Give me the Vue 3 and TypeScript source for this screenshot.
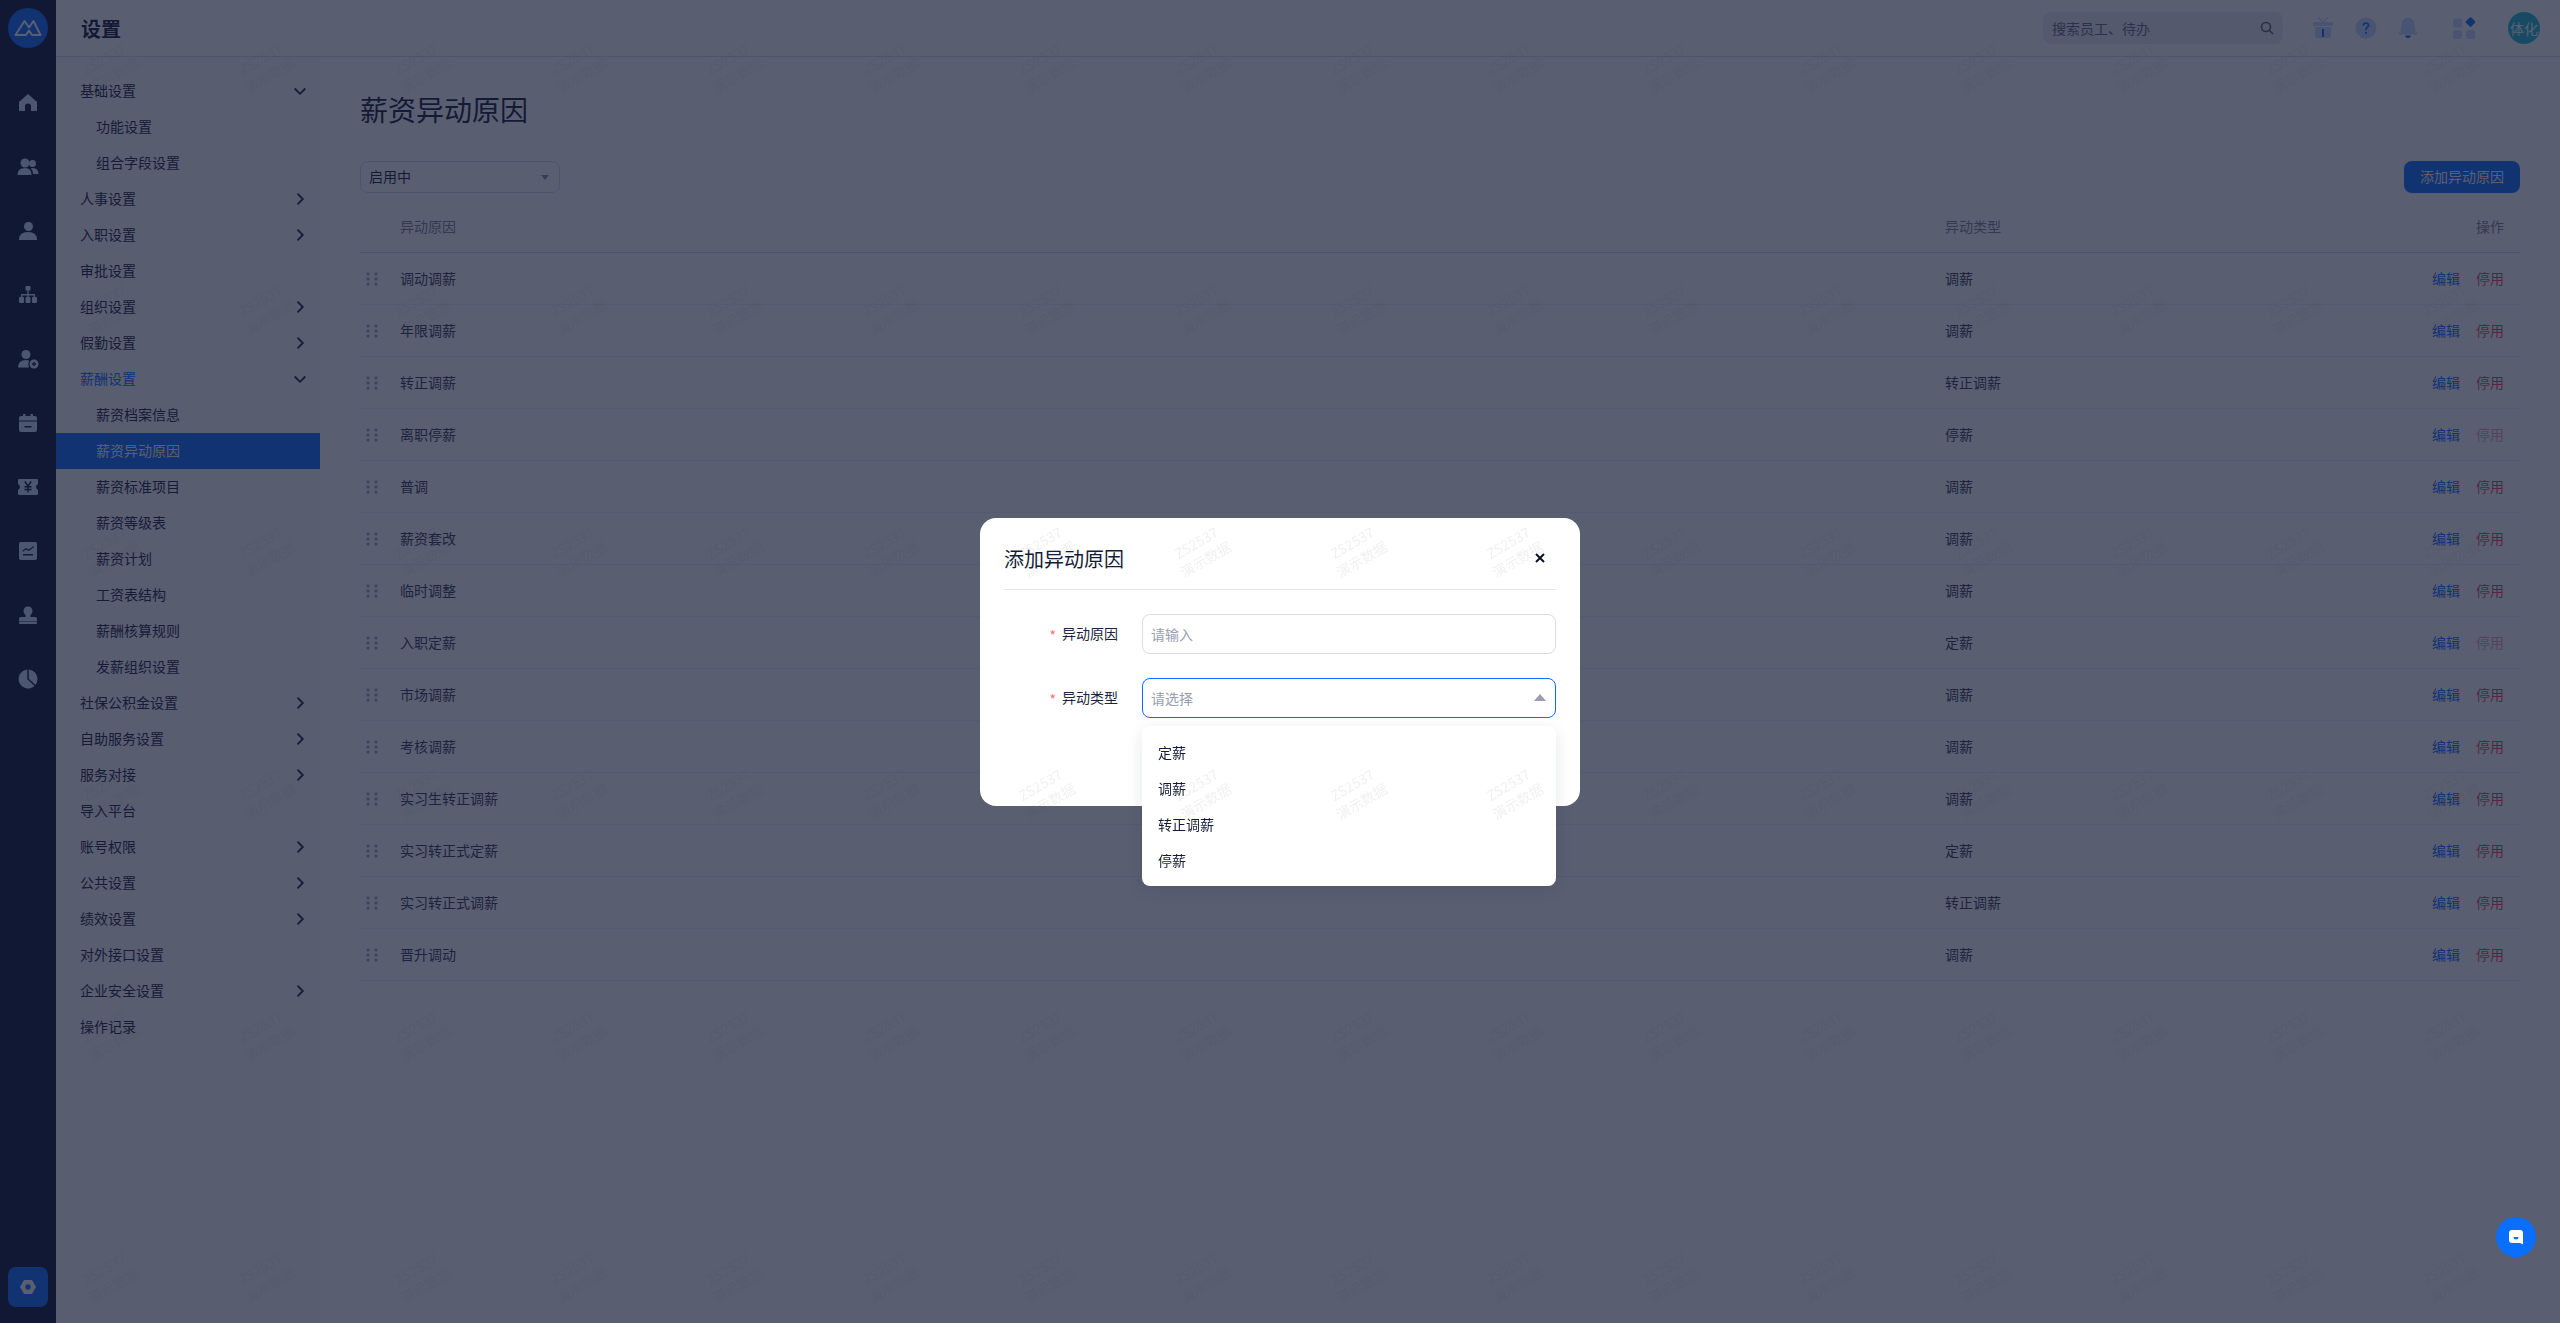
<template>
  <div class="page">
    <aside class="rail">
      <div class="logo">
        <svg width="28" height="18" viewBox="0 0 28 18" fill="none" stroke="#fff" stroke-width="2" stroke-linejoin="round">
          <path d="M1.500 16 L10.500 2 L15 8.500 L19.500 2 L26.500 16 H18 L15 11.500 L12 16 Z" />
        </svg>
      </div>
      <nav class="rail-nav">
        <div class="rail-item">
          <svg width="20" height="20" viewBox="0 0 20 20" class="rail-icon"><path d="M10 1 L19 9 V18 H13 V13 Q13 10.500 10 10.500 Q7 10.500 7 13 V18 H1 V9 Z" /></svg>
        </div>
        <div class="rail-item">
          <svg width="22" height="20" viewBox="0 0 22 20" class="rail-icon">
            <circle cx="8" cy="6" r="4.500" /><path d="M0.500 18 Q0.500 11 8 11 Q14.500 11 14.500 18 Z" />
            <circle cx="15.500" cy="6.500" r="3.500" /><path d="M15.500 11 Q21.500 11 21.500 17 H16 Q16 13 13.500 11.500 Z" />
          </svg>
        </div>
        <div class="rail-item">
          <svg width="20" height="20" viewBox="0 0 20 20" class="rail-icon"><circle cx="10.500" cy="5.500" r="4.500" /><path d="M1 19 Q1 11 10 11 Q19 11 19 19 Z" /></svg>
        </div>
        <div class="rail-item">
          <svg width="20" height="20" viewBox="0 0 20 20" class="rail-icon">
            <rect x="7.500" y="1" width="5" height="4.500" rx="1" />
            <path d="M9.300 5 h1.400 v4 h6.300 v3 h-1.400 v-1.600 h-4.900 v1.600 h-1.400 v-1.600 h-4.900 v1.600 h-1.400 v-3 h6.300 z" />
            <rect x="1" y="12" width="5" height="6" rx="1" /><rect x="7.500" y="12" width="5" height="6" rx="1" /><rect x="14" y="12" width="5" height="6" rx="1" />
          </svg>
        </div>
        <div class="rail-item">
          <svg width="22" height="20" viewBox="0 0 22 20" class="rail-icon">
            <circle cx="9" cy="5.500" r="4.500" /><path d="M1 18.500 Q1 11 9 11 Q11 11 12 11.500 Q10.500 15 12 18.500 Z" />
            <circle cx="17" cy="15" r="4.500" /><path d="M16.300 13 h1.400 v1.300 h1.300 v1.400 h-1.300 v1.300 h-1.400 v-1.300 h-1.300 v-1.400 h1.300 z" fill="#0d1730" />
          </svg>
        </div>
        <div class="rail-item">
          <svg width="20" height="20" viewBox="0 0 20 20" class="rail-icon">
            <path d="M3 3 H5 V1 H7.500 V3 H12.500 V1 H15 V3 H17 Q19 3 19 5 V7.500 H1 V5 Q1 3 3 3 Z" />
            <path fill-rule="evenodd" d="M1 8.500 H19 V17 Q19 19 17 19 H3 Q1 19 1 17 Z M6.500 13 V14.500 H13.500 V13 Z" />
          </svg>
        </div>
        <div class="rail-item">
          <svg width="20" height="16" viewBox="0 0 20 16" class="rail-icon">
            <path d="M1 0 H19 Q20 0 20 1 V5 Q18 6 18 8 Q18 10 20 11 V15 Q20 16 19 16 H1 Q0 16 0 15 V11 Q2 10 2 8 Q2 6 0 5 V1 Q0 0 1 0 Z" />
            <path d="M6.800 2.500 L10 7 L13.200 2.500 M10 7 V13.500 M6.500 7.800 H13.500 M6.500 10.500 H13.500" fill="none" stroke="#0d1730" stroke-width="1.400" />
          </svg>
        </div>
        <div class="rail-item">
          <svg width="18" height="18" viewBox="0 0 18 18" class="rail-icon">
            <path fill-rule="evenodd" d="M2 0 H16 Q18 0 18 2 V16 Q18 18 16 18 H2 Q0 18 0 16 V2 Q0 0 2 0 Z M3.500 8.500 L7 6 L10 7.500 L14.500 4 L15 5 L10 9 L7 7.500 L4 9.700 Z M4 12 H14 V13.500 H4 Z" />
          </svg>
        </div>
        <div class="rail-item">
          <svg width="18" height="18" viewBox="0 0 18 18" class="rail-icon"><circle cx="9" cy="5" r="4.500" /><path d="M6.500 8 H11.500 V11 H16 Q18 11 18 13 V15 H0 V13 Q0 11 2 11 H6.500 Z" /><rect x="0" y="15.500" width="18" height="2.500" rx="1" /></svg>
        </div>
        <div class="rail-item">
          <svg width="20" height="20" viewBox="0 0 20 20" class="rail-icon">
            <path d="M9.300 0.500 V10.300 L16.500 17 A9.500 9.500 0 1 1 9.300 0.500 Z" />
            <path d="M10.800 0.500 A9.500 9.500 0 0 1 19.500 10 Q19.500 13.500 17.500 16 L10.800 9.700 Z" />
          </svg>
        </div>
      </nav>
      <div class="rail-setting">
        <svg width="16" height="16" viewBox="0 0 16 16">
          <path fill-rule="evenodd" fill="#fff" d="M4 1 H12 L16 8 L12 15 H4 L0 8 Z M8 5.300 A2.700 2.700 0 1 0 8 10.700 A2.700 2.700 0 1 0 8 5.300 Z" />
        </svg>
      </div>
    </aside>

    <div class="body">
      <header class="topbar">
        <h1 class="topbar-title">设置</h1>
        <div class="search">
          <span class="search-text">搜索员工、待办</span>
          <svg width="14" height="14" viewBox="0 0 14 14" fill="none" stroke="#5a5f78" stroke-width="1.600"><circle cx="6" cy="6" r="4.500" /><path d="M9.500 9.500 L13 13" /></svg>
        </div>
        <div class="top-icons">
          <svg class="ic-gift" width="22" height="22" viewBox="0 0 22 22">
            <path d="M1 6 Q1 5 2 5 H20 Q21 5 21 6 V9 H1 Z" fill="#c4dcff" />
            <path d="M3 10 H19 V19 Q19 21 17 21 H5 Q3 21 3 19 Z" fill="#c4dcff" />
            <path d="M6 0.500 L11 5 L16 0.500" fill="none" stroke="#c4dcff" stroke-width="1.500" />
            <rect x="10" y="12" width="2" height="8" fill="#0a6eff" />
          </svg>
          <svg class="ic-help" width="22" height="22" viewBox="0 0 22 22">
            <circle cx="11" cy="11" r="10.500" fill="#c4dcff" />
            <path d="M8.500 8.500 Q8.500 6 11 6 Q13.500 6 13.500 8.300 Q13.500 9.700 11.900 10.600 Q11 11.200 11 13" fill="none" stroke="#0a6eff" stroke-width="1.700" />
            <circle cx="11" cy="15.800" r="1.100" fill="#0a6eff" />
          </svg>
          <svg class="ic-bell" width="20" height="22" viewBox="0 0 20 22">
            <path d="M10 0.500 Q16.500 1 16.500 9 Q16.500 14 19.500 16 Q20 17.500 18.500 17.500 H1.500 Q0 17.500 0.500 16 Q3.500 14 3.500 9 Q3.500 1 10 0.500 Z" fill="#c4dcff" />
            <path d="M7 18.500 H13 Q12.500 21 10 21 Q7.500 21 7 18.500 Z" fill="#0a6eff" />
          </svg>
          <svg class="ic-grid" width="22" height="22" viewBox="0 0 22 22">
            <rect x="0" y="1.500" width="9" height="9" rx="2.500" fill="#c4dcff" />
            <rect x="0" y="13" width="9" height="9" rx="2.500" fill="#c4dcff" />
            <rect x="13" y="13" width="9" height="9" rx="2.500" fill="#c4dcff" />
            <rect x="13.700" y="1.200" width="7.600" height="7.600" rx="1.500" transform="rotate(45 17.500 5)" fill="#0a6eff" />
          </svg>
          <div class="avatar">体化</div>
        </div>
      </header>

      <div class="content">
        <aside class="sidebar">
          <div
            v-for="item in menu"
            :key="item.label"
            class="menu-item"
            :class="{ child: item.child, active: item.active, open: item.open }"
          >
            <span>{{ item.label }}</span>
            <svg v-if="item.arrow" class="chevron" :class="item.arrow" width="12" height="12" viewBox="0 0 12 12" fill="none" stroke="#1c2440" stroke-width="1.800">
              <path d="M3.500 0.700 L8.800 6 L3.500 11.300" />
            </svg>
          </div>
        </aside>

        <main class="main">
          <h2 class="page-title">薪资异动原因</h2>
          <div class="toolbar">
            <div class="filter">
              <span>启用中</span>
              <i class="tri down"></i>
            </div>
            <button class="add-btn">添加异动原因</button>
          </div>
          <div class="table">
            <div class="tr th">
              <span></span>
              <span>异动原因</span>
              <span>异动类型</span>
              <span class="ops">操作</span>
            </div>
            <div v-for="row in rows" :key="row.name" class="tr">
              <svg class="handle" width="12" height="14" viewBox="0 0 12 14" fill="#a2a6b8">
                <circle cx="2" cy="2" r="1.600" /><circle cx="10" cy="2" r="1.600" />
                <circle cx="2" cy="7" r="1.600" /><circle cx="10" cy="7" r="1.600" />
                <circle cx="2" cy="12" r="1.600" /><circle cx="10" cy="12" r="1.600" />
              </svg>
              <span>{{ row.name }}</span>
              <span>{{ row.type }}</span>
              <span class="ops">
                <a class="edit">编辑</a>
                <a class="stop" :class="{ off: row.off }">停用</a>
              </span>
            </div>
          </div>
        </main>
      </div>
    </div>

    <div class="mask">
      <div class="dialog">
        <div class="dialog-head">
          <span>添加异动原因</span>
          <svg width="10" height="10" viewBox="0 0 10 10" stroke="#0c1226" stroke-width="2"><path d="M1 1 L9 9 M9 1 L1 9" /></svg>
        </div>
        <div class="form">
          <div class="form-row">
            <label class="form-label"><em>*</em>异动原因</label>
            <div class="field">请输入</div>
          </div>
          <div class="form-row">
            <label class="form-label"><em>*</em>异动类型</label>
            <div class="select-wrap">
              <div class="field focus">
                <span>请选择</span>
                <i class="tri up"></i>
              </div>
              <ul class="options">
                <li v-for="opt in options" :key="opt">{{ opt }}</li>
              </ul>
            </div>
          </div>
        </div>
      </div>
    </div>

    <div class="float-btn">
      <svg width="16" height="16" viewBox="0 0 16 16">
        <path fill="#fff" d="M4 1 H12 Q15 1 15 4 V14.500 Q15 15.500 14 15 L12 14 H4 Q1 14 1 11 V4 Q1 1 4 1 Z" />
        <path fill="#0a6eff" d="M5.500 8 H10.500 Q10.500 10.500 8 10.500 Q5.500 10.500 5.500 8 Z" />
      </svg>
    </div>

    <div class="watermarks">
      <div v-for="n in 96" :key="n" class="wm">
        <div class="wm-text">ZS2537<br />演示数据</div>
      </div>
    </div>
  </div>
</template>

<script setup lang="ts">
interface MenuItem {
  label: string;
  child?: boolean;
  active?: boolean;
  open?: boolean;
  arrow?: "right" | "down";
}

interface Row {
  name: string;
  type: string;
  off?: boolean;
}

const menu: MenuItem[] = [
  { label: "基础设置", arrow: "down" },
  { label: "功能设置", child: true },
  { label: "组合字段设置", child: true },
  { label: "人事设置", arrow: "right" },
  { label: "入职设置", arrow: "right" },
  { label: "审批设置" },
  { label: "组织设置", arrow: "right" },
  { label: "假勤设置", arrow: "right" },
  { label: "薪酬设置", arrow: "down", open: true },
  { label: "薪资档案信息", child: true },
  { label: "薪资异动原因", child: true, active: true },
  { label: "薪资标准项目", child: true },
  { label: "薪资等级表", child: true },
  { label: "薪资计划", child: true },
  { label: "工资表结构", child: true },
  { label: "薪酬核算规则", child: true },
  { label: "发薪组织设置", child: true },
  { label: "社保公积金设置", arrow: "right" },
  { label: "自助服务设置", arrow: "right" },
  { label: "服务对接", arrow: "right" },
  { label: "导入平台" },
  { label: "账号权限", arrow: "right" },
  { label: "公共设置", arrow: "right" },
  { label: "绩效设置", arrow: "right" },
  { label: "对外接口设置" },
  { label: "企业安全设置", arrow: "right" },
  { label: "操作记录" },
];

const rows: Row[] = [
  { name: "调动调薪", type: "调薪" },
  { name: "年限调薪", type: "调薪" },
  { name: "转正调薪", type: "转正调薪" },
  { name: "离职停薪", type: "停薪", off: true },
  { name: "普调", type: "调薪" },
  { name: "薪资套改", type: "调薪" },
  { name: "临时调整", type: "调薪" },
  { name: "入职定薪", type: "定薪", off: true },
  { name: "市场调薪", type: "调薪" },
  { name: "考核调薪", type: "调薪" },
  { name: "实习生转正调薪", type: "调薪" },
  { name: "实习转正式定薪", type: "定薪" },
  { name: "实习转正式调薪", type: "转正调薪" },
  { name: "晋升调动", type: "调薪" },
];

const options = ["定薪", "调薪", "转正调薪", "停薪"];
</script>

<style>
html,
body {
  margin: 0;
  overflow: hidden;
  background: #fff;
}
</style>

<style scoped>
* {
  box-sizing: border-box;
}

.page {
  display: flex;
  height: 100vh;
  color: #141c38;
  font-family: "Noto Sans CJK SC", "Noto Sans", sans-serif;
  font-size: 14px;
}

.rail {
  display: flex;
  flex-direction: column;
  align-items: center;
  flex: none;
  width: 56px;
  padding: 8px 0 16px;
  background: #0d1730;
}

.logo {
  display: flex;
  align-items: center;
  justify-content: center;
  width: 40px;
  height: 40px;
  border-radius: 50%;
  background: #0a6eff;
}

.rail-nav {
  margin-top: 23px;
}

.rail-item {
  display: flex;
  align-items: center;
  justify-content: center;
  width: 56px;
  height: 64px;
}

.rail-icon {
  fill: #d0e4ff;
}

.rail-setting {
  display: flex;
  align-items: center;
  justify-content: center;
  width: 40px;
  height: 40px;
  margin-top: auto;
  border-radius: 8px;
  background: #0a6eff;
}

.body {
  display: flex;
  flex: 1;
  flex-direction: column;
  min-width: 0;
}

.topbar {
  display: flex;
  align-items: center;
  flex: none;
  height: 57px;
  padding-left: 25px;
  border-bottom: 1px solid #dcdde6;
  background: #fff;
}

.topbar-title {
  margin: 0;
  font-size: 20px;
  font-weight: 700;
}

.search {
  display: flex;
  align-items: center;
  justify-content: space-between;
  width: 240px;
  height: 32px;
  margin-left: auto;
  padding: 0 9px;
  border-radius: 8px;
  background: #eceef3;
}

.search-text {
  color: #646a82;
}

.top-icons {
  display: flex;
  align-items: center;
  width: 277px;
  height: 32px;
}

.ic-gift {
  margin-left: 29px;
}

.ic-help {
  margin-left: 21px;
}

.ic-bell {
  margin-left: 21px;
}

.ic-grid {
  margin-left: 35px;
}

.avatar {
  display: flex;
  align-items: center;
  justify-content: center;
  width: 32px;
  height: 32px;
  margin-left: 33px;
  border-radius: 50%;
  background: #1fc0d4;
  color: #fff;
}

.content {
  display: flex;
  flex: 1;
  min-height: 0;
}

.sidebar {
  flex: none;
  width: 264px;
  padding-top: 16px;
  background: #fafafc;
}

.menu-item {
  display: flex;
  align-items: center;
  justify-content: space-between;
  height: 36px;
  padding: 0 14px 2px 24px;
  color: #1c2440;
}

.menu-item.child {
  padding-left: 40px;
}

.menu-item.open {
  color: #0a6eff;
}

.menu-item.active {
  background: #0a6eff;
  color: #fff;
}

.chevron {
  margin-top: 2px;
}

.chevron.down {
  transform: rotate(90deg);
}

.main {
  flex: 1;
  min-width: 0;
  padding: 31px 40px 0;
  background: #fff;
}

.page-title {
  margin: 0 0 31px;
  font-size: 28px;
  font-weight: 400;
  line-height: 42px;
}

.toolbar {
  display: flex;
  justify-content: space-between;
  margin-bottom: 9px;
}

.filter {
  display: flex;
  align-items: center;
  justify-content: space-between;
  width: 200px;
  height: 32px;
  padding: 0 10px 2px 8px;
  border: 1px solid #d6d8e2;
  border-radius: 8px;
}

.tri {
  display: block;
  width: 0;
  height: 0;
  border-left: 6px solid transparent;
  border-right: 6px solid transparent;
}

.tri.down {
  margin-top: 2px;
  border-left-width: 4.500px;
  border-right-width: 4.500px;
  border-top: 5px solid #8d92a8;
}

.tri.up {
  border-bottom: 7px solid #9a9db3;
}

.add-btn {
  width: 116px;
  height: 32px;
  padding: 0 0 2px;
  border: 0;
  border-radius: 8px;
  background: #0a6eff;
  color: #fff;
  font: inherit;
}

.tr {
  display: grid;
  grid-template-columns: 40px 1fr 300px 275px;
  align-items: center;
  height: 52px;
  padding-bottom: 2px;
  border-bottom: 1px solid #f1f2f6;
  color: #333a55;
}

.tr.th {
  height: 51px;
  border-bottom-color: #dcdde6;
  color: #7f849a;
}

.handle {
  margin: 2px 0 0 6px;
}

.ops {
  padding-right: 16px;
  text-align: right;
}

.edit {
  color: #0a6eff;
}

.stop {
  margin-left: 16px;
  color: #f2455c;
}

.stop.off {
  color: #f2a5b0;
}

.mask {
  position: fixed;
  inset: 0;
  z-index: 10;
  display: flex;
  align-items: center;
  justify-content: center;
  background: rgba(20, 26, 53, 0.7);
}

.dialog {
  width: 600px;
  height: 288px;
  padding: 0 24px;
  border-radius: 16px;
  background: #fff;
}

.dialog-head {
  display: flex;
  align-items: center;
  justify-content: space-between;
  height: 72px;
  padding: 10px 11px 0 0;
  border-bottom: 1px solid #e6e7ee;
  color: #141c38;
  font-size: 20px;
}

.form {
  display: flex;
  flex-direction: column;
  gap: 24px;
  margin-top: 24px;
}

.form-row {
  display: flex;
  align-items: center;
}

.form-label {
  flex: none;
  width: 114px;
  margin-right: 24px;
  color: #1c2440;
  text-align: right;
}

.form-label em {
  margin-right: 6px;
  color: #ff6d7e;
  font-style: normal;
  vertical-align: -2px;
}

.field {
  display: flex;
  align-items: center;
  justify-content: space-between;
  flex: 1;
  height: 40px;
  padding: 0 8px;
  border: 1px solid #dadbe5;
  border-radius: 8px;
  color: #9a9db0;
}

.field.focus {
  padding-right: 9px;
  border-color: #0a6eff;
}

.select-wrap {
  position: relative;
  display: flex;
  flex: 1;
}

.options {
  position: absolute;
  top: calc(100% + 8px);
  left: 0;
  right: 0;
  margin: 0;
  padding: 8px 0;
  border-radius: 8px;
  background: #fff;
  box-shadow: 0 4px 16px rgba(20, 26, 53, 0.1);
  list-style: none;
}

.options li {
  height: 36px;
  padding-left: 16px;
  color: #141c38;
  line-height: 36px;
}

.float-btn {
  position: fixed;
  right: 24px;
  bottom: 66px;
  z-index: 11;
  display: flex;
  align-items: center;
  justify-content: center;
  width: 40px;
  height: 40px;
  border-radius: 50%;
  background: #0a6eff;
}

.watermarks {
  position: fixed;
  top: -54px;
  left: 31px;
  z-index: 20;
  display: grid;
  grid-template-columns: repeat(16, 156px);
  grid-auto-rows: 242px;
  pointer-events: none;
}

.wm {
  display: flex;
  align-items: center;
  justify-content: center;
}

.wm-text {
  color: rgba(60, 64, 80, 0.08);
  line-height: 19px;
  text-align: center;
  transform: rotate(-30deg);
}
</style>
